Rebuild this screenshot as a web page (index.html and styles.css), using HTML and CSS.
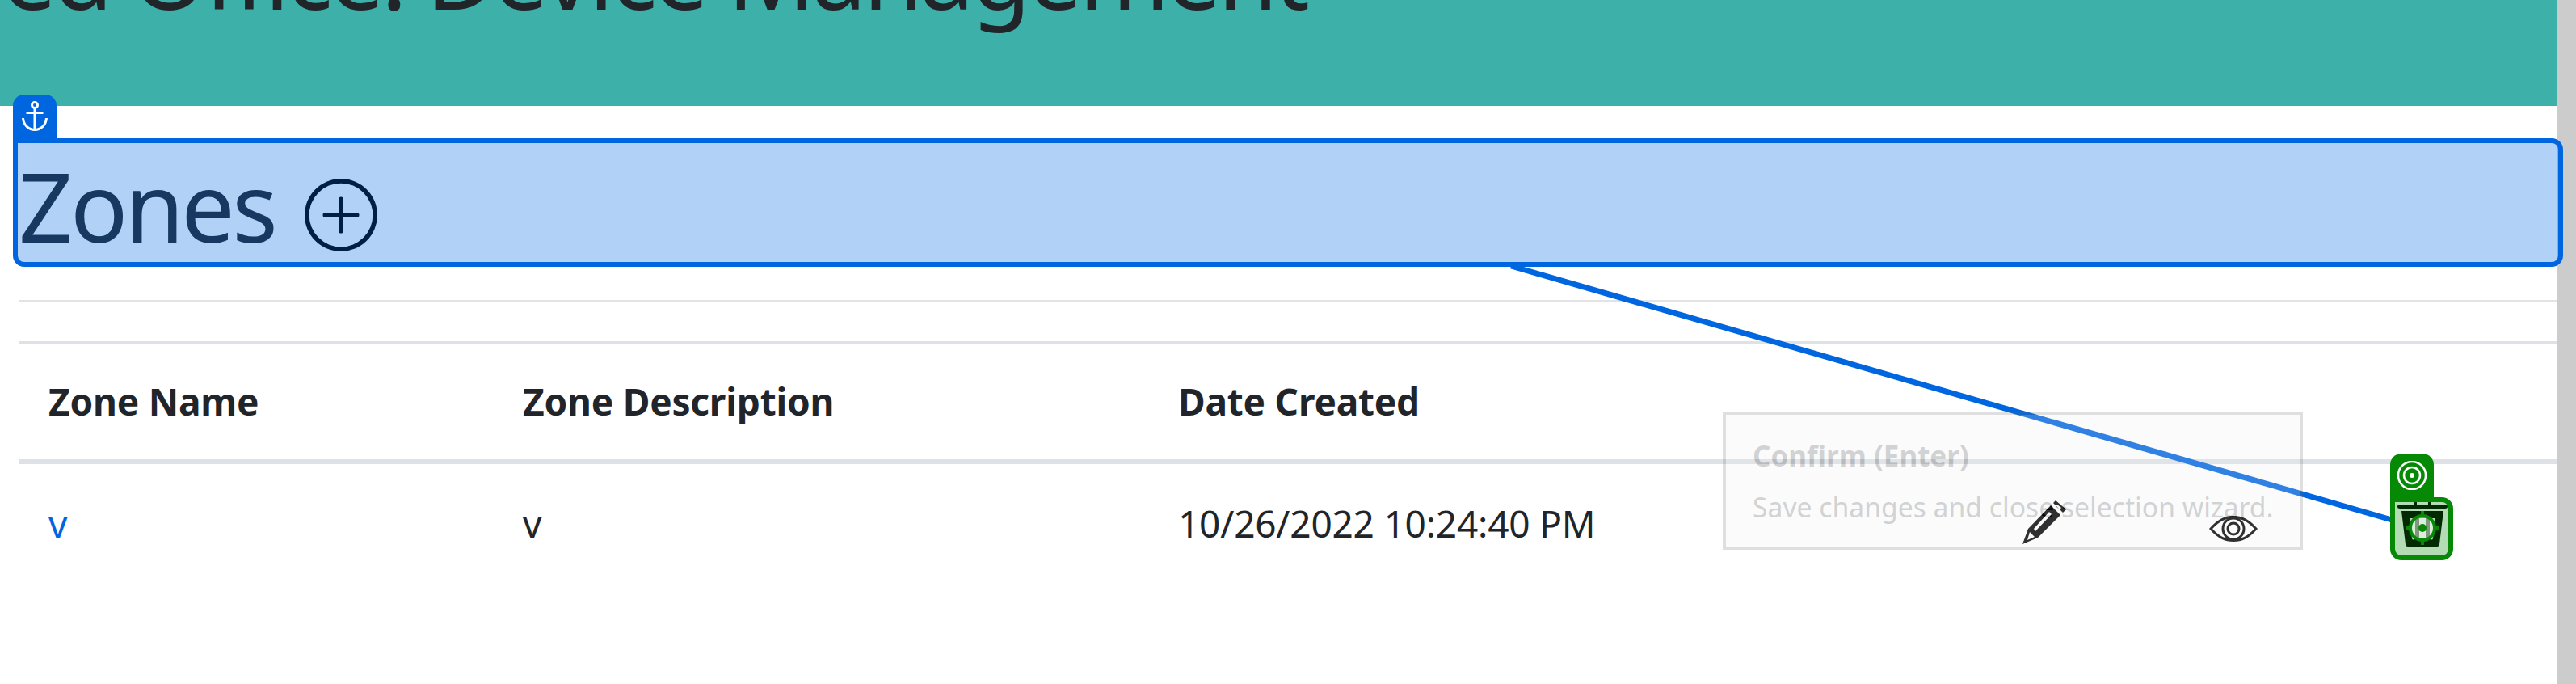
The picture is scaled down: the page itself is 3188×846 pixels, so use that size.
FILE: index.html
```html
<!DOCTYPE html>
<html lang="en">
	<head>
		<meta charset="utf-8">
		<title>Device Management</title>
		<link rel="stylesheet" href="styles.css">
	</head>
	<body>
		<div class="page">
			<div class="hero">
				<h1>Managed Office: Device Management</h1>
			</div>
			<div class="content">
				<h2 class="zones">Zones
					<svg class="add" viewBox="0 0 16 16" fill="#000">
						<path d="M8 15A7 7 0 1 1 8 1a7 7 0 0 1 0 14m0 1A8 8 0 1 0 8 0a8 8 0 0 0 0 16"/>
						<path d="M8 4a.5.5 0 0 1 .5.5v3h3a.5.5 0 0 1 0 1h-3v3a.5.5 0 0 1-1 0v-3h-3a.5.5 0 0 1 0-1h3v-3A.5.5 0 0 1 8 4"/>
					</svg>
				</h2>
				<hr class="rule">
				<table class="zone-table">
					<colgroup>
						<col class="c-name"><col class="c-desc"><col class="c-date"><col class="c-act"><col class="c-act"><col class="c-act"><col class="c-end">
					</colgroup>
					<thead>
						<tr>
							<th>Zone Name</th>
							<th>Zone Description</th>
							<th>Date Created</th>
							<th></th><th></th><th></th><th></th>
						</tr>
					</thead>
					<tbody>
						<tr>
							<td><a href="#">v</a></td>
							<td>v</td>
							<td>10/26/2022 10:24:40 PM</td>
							<td class="act">
								<svg class="pencil" viewBox="0 0 54 54">
									<path d="M0 54 L7 35 L35 6 L47 18 L19 46 Z M6 49 L15 45 L9 39 Z M14 35 L16 38 L36 17 L33 14 Z" fill-rule="evenodd"/>
									<path d="M38 3 L41 0 L54 11 L50 15 Z M43 5 L41 7 L46 11 L48 9 Z" fill-rule="evenodd"/>
								</svg>
							</td>
							<td class="act">
								<svg class="eye" viewBox="0 0 60 32" fill="none" stroke="#000">
									<path d="M2 16 C12 5 20 1.500 30 1.500 C40 1.500 48 5 58 16 C48 27 40 30.500 30 30.500 C20 30.500 12 27 2 16 Z" stroke-width="3"/>
									<circle cx="30" cy="16" r="13" stroke-width="3"/>
									<circle cx="30" cy="16" r="7" stroke-width="3"/>
								</svg>
							</td>
							<td class="act">
								<svg class="trash" viewBox="0 0 62 60">
									<path d="M20 8 L20 4 Q20 0 25 0 L37 0 Q42 0 42 4 L42 8 L59 8 Q62 8 62 10.500 Q62 13 59 13 L3 13 Q0 13 0 10.500 Q0 8 3 8 Z M24 8 L38 8 L38 4 L24 4 Z" fill-rule="evenodd"/>
									<path d="M5 16 L57 16 L52 57 Q52 60 49 60 L13 60 Q10 60 10 57 Z M15 25 L18 50 Q19 53 22 50 L22 25 Z M27 25 L27 51 Q31 54 35 51 L35 25 Z M40 25 L40 50 Q43 53 44 50 L47 25 Z" fill-rule="evenodd"/>
								</svg>
							</td>
							<td></td>
						</tr>
					</tbody>
				</table>
			</div>
			<div class="scrollbar"></div>

			<svg class="connector" width="3188" height="846">
				<line x1="1870" y1="329" x2="2960" y2="643"/>
			</svg>

			<div class="hint">
				<div class="hint-title">Confirm (Enter)</div>
				<div class="hint-text">Save changes and close selection wizard.</div>
			</div>

			<div class="select-box"></div>
			<div class="tab tab-blue">
				<svg viewBox="0 0 32 37" fill="none" stroke="#fff" stroke-width="3">
					<circle cx="16" cy="5" r="3.500"/>
					<path d="M16 9 L16 35 M5.500 14.500 L26.500 14.500"/>
					<path d="M1.500 21 C2 30 9 35.500 16 35.500 C23 35.500 30 30 30.500 21"/>
				</svg>
			</div>

			<div class="target-box"></div>
			<div class="tab tab-green">
				<svg viewBox="0 0 36 36" fill="none" stroke="#fff" stroke-width="2.500">
					<circle cx="18" cy="18" r="17"/>
					<circle cx="18" cy="18" r="10"/>
					<circle cx="18" cy="18" r="3" fill="#fff" stroke="none"/>
				</svg>
			</div>
			<svg class="crosshair" viewBox="0 0 42 42">
				<circle cx="21" cy="21" r="15" fill="#fff" fill-opacity=".5" stroke="#068a06" stroke-width="4"/>
				<circle cx="21" cy="21" r="5" fill="#068a06"/>
				<path d="M21 0 L21 7 M21 35 L21 42 M0 21 L7 21 M35 21 L42 21" stroke="#068a06" stroke-width="4"/>
			</svg>
		</div>
	</body>
</html>
```

FILE: styles.css
```css
* {
	box-sizing: border-box;
}
html, body {
	margin: 0;
	height: 846px;
	overflow: hidden;
	background-color: #fff;
}
body {
	font-family: "Noto Sans", "Open Sans", sans-serif;
	color: #212529;
}
.page {
	position: relative;
	height: 846px;
	padding-right: 23px;
}
.hero {
	height: 131px;
	background-color: #3cb0a9;
	overflow: hidden;
}
.hero h1 {
	margin: -114px 0 0 -369px;
	font-size: 120px;
	font-weight: 400;
	line-height: 160px;
	letter-spacing: -4px;
	white-space: nowrap;
}
.content {
	padding-left: 23px;
}
.zones {
	margin: 64px 0 0 0;
	height: 176px;
	font-size: 118px;
	font-weight: 400;
	line-height: 120px;
	white-space: nowrap;
	letter-spacing: -3.500px;
}
.add {
	width: 90px;
	height: 90px;
	margin-left: 9px;
	vertical-align: -11px;
}
.rule {
	margin: 0;
	height: 3px;
	border: none;
	background-color: #e2e3e5;
}
.zone-table {
	margin-top: 48px;
	width: 3142px;
	table-layout: fixed;
	border-collapse: collapse;
	border-top: 3px solid #dee2e6;
	font-size: 46px;
	letter-spacing: -.2px;
}
.c-name { width: 587px; }
.c-desc { width: 811px; }
.c-date { width: 992px; }
.c-act { width: 234px; }
.c-end { width: 50px; }
th {
	height: 147px;
	padding: 0 0 0 37px;
	text-align: left;
	font-weight: 700;
	border-bottom: 6px solid #dee2e6;
}
td {
	height: 150px;
	padding: 0 0 0 37px;
	vertical-align: middle;
}
td a {
	color: #0066e0;
	text-decoration: none;
}
td.act {
	padding: 10px 0 0 0;
	text-align: center;
}
.pencil {
	width: 54px;
	height: 54px;
}
.eye {
	width: 60px;
	height: 32px;
}
.trash {
	width: 62px;
	height: 60px;
}
.scrollbar {
	position: absolute;
	top: 0;
	right: 0;
	width: 23px;
	height: 846px;
	background-color: #ccc;
}
.connector {
	position: absolute;
	top: 0;
	left: 0;
}
.connector line {
	stroke: #0066e0;
	stroke-width: 7;
}
.hint {
	position: absolute;
	left: 2132px;
	top: 509px;
	width: 718px;
	height: 171px;
	padding: 26px 33px;
	background-color: #eee;
	border: 4px solid #666;
	opacity: .2;
	color: #212529;
	font-size: 33.700px;
	white-space: nowrap;
}
.hint-title {
	font-size: 35px;
	font-weight: 700;
	line-height: 50px;
}
.hint-text {
	margin-top: 13px;
	line-height: 50px;
}
.select-box {
	position: absolute;
	left: 16px;
	top: 171px;
	width: 3156px;
	height: 159px;
	background-color: rgba(0, 102, 224, .3);
	border: 6px solid #0066e0;
	border-radius: 0 14px 14px 14px;
}
.tab {
	position: absolute;
	width: 54px;
	border-radius: 14px 14px 0 0;
}
.tab-blue {
	left: 16px;
	top: 117px;
	height: 54px;
	padding: 8px 11px;
	background-color: #0066e0;
}
.tab-blue svg {
	display: block;
	width: 32px;
	height: 37px;
}
.target-box {
	position: absolute;
	left: 2958px;
	top: 615px;
	width: 78px;
	height: 78px;
	background-color: rgba(6, 138, 6, .3);
	border: 6px solid #068a06;
	border-radius: 0 14px 14px 14px;
}
.tab-green {
	left: 2958px;
	top: 561px;
	height: 54px;
	padding: 9px;
	background-color: #068a06;
}
.tab-green svg {
	display: block;
	width: 36px;
	height: 36px;
}
.crosshair {
	position: absolute;
	left: 2977px;
	top: 632px;
	width: 42px;
	height: 42px;
}
```
